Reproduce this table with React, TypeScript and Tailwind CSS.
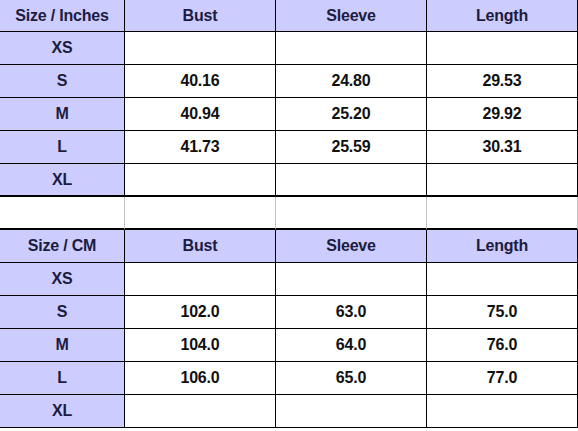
const inches = {
  title: "Size / Inches",
  rows: [
    ["XS", "", "", ""],
    ["S", "40.16", "24.80", "29.53"],
    ["M", "40.94", "25.20", "29.92"],
    ["L", "41.73", "25.59", "30.31"],
    ["XL", "", "", ""],
  ],
};

const cm = {
  title: "Size / CM",
  rows: [
    ["XS", "", "", ""],
    ["S", "102.0", "63.0", "75.0"],
    ["M", "104.0", "64.0", "76.0"],
    ["L", "106.0", "65.0", "77.0"],
    ["XL", "", "", ""],
  ],
};

const cols = "grid grid-cols-[125px_151px_151px_151px]";

function Cell({ children, head, thick, tall }: { children?: React.ReactNode; head?: boolean; thick?: boolean; tall?: boolean }) {
  return (
    <div
      className={`flex items-center justify-center border-r border-black ${thick ? "border-b-2" : "border-b"} ${
        tall ? "h-[33px]" : "h-[32px]"
      } ${head ? "bg-[#ccccff] text-[#1c1c3e]" : "bg-white text-[#111111]"}`}
    >
      {children}
    </div>
  );
}

function SizeTable({ title, rows, first }: { title: string; rows: string[][]; first?: boolean }) {
  return (
    <div className={cols}>
      <Cell head tall={!first}>{title}</Cell>
      <Cell head tall={!first}>Bust</Cell>
      <Cell head tall={!first}>Sleeve</Cell>
      <Cell head tall={!first}>Length</Cell>
      {rows.map((r, i) => {
        const last = first && i === rows.length - 1;
        return r.map((v, j) => (
          <Cell key={`${i}-${j}`} head={j === 0} thick={last} tall>
            {v}
          </Cell>
        ));
      })}
    </div>
  );
}

export default function App() {
  return (
    <div className="w-[578px] h-[431px] bg-white overflow-hidden font-['Liberation_Sans',Arial,sans-serif] font-bold text-[16px] tracking-[-0.2px]">
      <SizeTable {...inches} first />
      <div className={cols}>
        <div className="h-[33px] border-r border-[#c4c4c4] border-b-2 border-b-black" />
        <div className="h-[33px] border-r border-[#c4c4c4] border-b-2 border-b-black" />
        <div className="h-[33px] border-r border-[#c4c4c4] border-b-2 border-b-black" />
        <div className="h-[33px] border-r border-[#c4c4c4] border-b-2 border-b-black" />
      </div>
      <SizeTable {...cm} />
    </div>
  );
}
